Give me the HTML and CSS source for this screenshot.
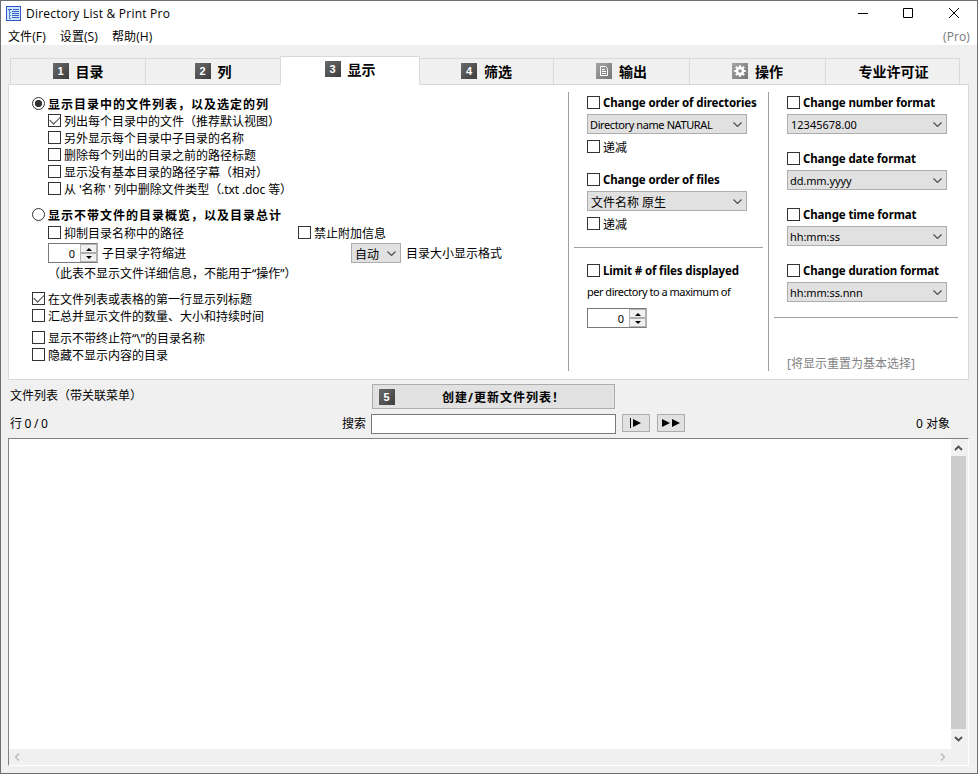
FILE: index.html
```html
<!DOCTYPE html>
<html lang="zh-CN">
<head>
  <meta charset="UTF-8" />
  <meta name="viewport" content="width=device-width, initial-scale=1.0"/>
  <title>Directory List &amp; Print Pro</title>
  <link rel="stylesheet" href="styles.css">
</head>
<body>
  <div class="window">
    <header class="titlebar">
      <svg class="app-icon" width="15" height="15" viewBox="0 0 15 15">
        <rect x="0.5" y="0.5" width="14" height="14" fill="#d3e5fb" stroke="#2d55c8"/>
        <path d="M2 3.5h4M7 3.5h6M6 5.5h7M6 7.5h7M6 9.5h7M6 11.5h7" stroke="#3560c9" fill="none"/>
        <path d="M3.5 4v8M3 6.5h2M3 9.5h2M3 12.5h2" stroke="#5a86dc" fill="none"/>
      </svg>
      <span class="app-name">Directory List &amp; Print Pro</span>
      <svg class="win-buttons" width="102" height="12" viewBox="0 0 102 12">
        <path d="M0 6.5h10M45.5 1.5h9v9h-9z" stroke="#000" fill="none"/>
        <path d="M91 1l10 10M101 1l-10 10" stroke="#000" fill="none"/>
      </svg>
    </header>
    <nav class="menubar">
      <span>文件(F)</span>
      <span>设置(S)</span>
      <span>帮助(H)</span>
      <span class="edition">(Pro)</span>
    </nav>

    <div class="tabs">
      <div class="tab w135"><i class="badge">1</i>目录</div>
      <div class="tab w135"><i class="badge">2</i>列</div>
      <div class="tab active"><i class="badge">3</i>显示</div>
      <div class="tab w133"><i class="badge">4</i>筛选</div>
      <div class="tab w136"><i class="badge light"><svg width="16" height="16" viewBox="0 0 16 16"><path d="M4.5 3.5h5l2 2v7h-7zM6 6.5h3M6 8.5h4M6 10.5h4" stroke="#fff" fill="none"/></svg></i>输出</div>
      <div class="tab w136"><i class="badge light"><svg width="16" height="16" viewBox="0 0 16 16"><circle cx="8" cy="8" r="3" stroke="#fff" stroke-width="2.4" fill="none"/><path d="M8 2.2v2M8 11.8v2M2.2 8h2M11.8 8h2M3.9 3.9l1.4 1.4M10.7 10.7l1.4 1.4M3.9 12.1l1.4-1.4M10.7 5.3l1.4-1.4" stroke="#fff" stroke-width="2.2"/></svg></i>操作</div>
      <div class="tab last">专业许可证</div>
    </div>

    <main class="panel">
      <section class="col-display">
        <div class="row head"><i class="radio on"></i>显示目录中的文件列表，以及选定的列</div>
        <div class="row sub"><i class="check on"></i>列出每个目录中的文件（推荐默认视图）</div>
        <div class="row sub"><i class="check"></i>另外显示每个目录中子目录的名称</div>
        <div class="row sub"><i class="check"></i>删除每个列出的目录之前的路径标题</div>
        <div class="row sub"><i class="check"></i>显示没有基本目录的路径字幕（相对）</div>
        <div class="row sub"><i class="check"></i><span class="types">从 '名称 ' 列中删除文件类型（.txt .doc 等）</span></div>

        <div class="row head second"><i class="radio"></i>显示不带文件的目录概览，以及目录总计</div>
        <div class="row sub pair">
          <span class="cell"><i class="check"></i>抑制目录名称中的路径</span>
          <span class="cell"><i class="check"></i>禁止附加信息</span>
        </div>
        <div class="row sub inputs">
          <div class="spin narrow"><b>0</b><i class="arrows"></i></div>
          <span class="indent-label">子目录字符缩进</span>
          <div class="select auto">自动<svg class="chev" width="9" height="5"><path d="M0.5 0.5l4 4 4-4"/></svg></div>
          <span>目录大小显示格式</span>
        </div>
        <div class="row sub note">（此表不显示文件详细信息，不能用于“操作”）</div>

        <div class="row gap9"><i class="check on"></i>在文件列表或表格的第一行显示列标题</div>
        <div class="row"><i class="check"></i>汇总并显示文件的数量、大小和持续时间</div>
        <div class="row gap5"><i class="check"></i><span>显示不带终止符“\”的目录名称</span></div>
        <div class="row"><i class="check"></i>隐藏不显示内容的目录</div>
      </section>

      <section class="col-order">
        <div class="row opt"><i class="check"></i>Change order of directories</div>
        <div class="select en dir">Directory name NATURAL<svg class="chev" width="9" height="5"><path d="M0.5 0.5l4 4 4-4"/></svg></div>
        <div class="row desc"><i class="check"></i>递减</div>
        <div class="row opt files"><i class="check"></i>Change order of files</div>
        <div class="select">文件名称 原生<svg class="chev" width="9" height="5"><path d="M0.5 0.5l4 4 4-4"/></svg></div>
        <div class="row desc"><i class="check"></i>递减</div>
        <hr>
        <div class="row opt limit"><i class="check"></i>Limit # of files displayed</div>
        <div class="row en per-dir">per directory to a maximum of</div>
        <div class="spin"><b>0</b><i class="arrows"></i></div>
      </section>

      <section class="col-format">
        <div class="row opt"><i class="check"></i>Change number format</div>
        <div class="select en">12345678.00<svg class="chev" width="9" height="5"><path d="M0.5 0.5l4 4 4-4"/></svg></div>
        <div class="row opt next"><i class="check"></i>Change date format</div>
        <div class="select en date">dd.mm.yyyy<svg class="chev" width="9" height="5"><path d="M0.5 0.5l4 4 4-4"/></svg></div>
        <div class="row opt next"><i class="check"></i>Change time format</div>
        <div class="select en date">hh:mm:ss<svg class="chev" width="9" height="5"><path d="M0.5 0.5l4 4 4-4"/></svg></div>
        <div class="row opt next"><i class="check"></i>Change duration format</div>
        <div class="select en date">hh:mm:ss.nnn<svg class="chev" width="9" height="5"><path d="M0.5 0.5l4 4 4-4"/></svg></div>
        <hr>
        <div class="row reset">[将显示重置为基本选择]</div>
      </section>
    </main>

    <div class="create-row">
      <span class="list-title">文件列表（带关联菜单）</span>
      <div class="create"><i class="badge">5</i><span>创建/更新文件列表！</span></div>
    </div>
    <div class="search-row">
      <span class="lines">行 0 / 0</span>
      <span class="search-label">搜索</span>
      <input class="search" type="text">
      <div class="btn"><svg width="26" height="16"><path d="M7.5 3v10" stroke="#000"/><path d="M10 4v8l8-4z"/></svg></div>
      <div class="btn"><svg width="26" height="16"><path d="M4 4v8l8-4zM14 4v8l8-4z"/></svg></div>
      <span class="objects">0 对象</span>
    </div>

    <div class="list">
      <div class="list-body"></div>
      <div class="vbar">
        <svg width="15" height="17"><path d="M4 11l3.5-3.5L11 11" stroke="#505050" stroke-width="1.8" fill="none"/></svg>
        <div class="thumb"></div>
        <svg width="15" height="20"><path d="M4 8l3.5 3.5L11 8" stroke="#505050" stroke-width="1.8" fill="none"/></svg>
      </div>
      <div class="hbar">
        <svg width="16" height="16"><path d="M10 4.5L6.5 8l3.5 3.5" stroke="#bfbfbf" stroke-width="1.6" fill="none"/></svg>
        <svg width="16" height="16"><path d="M6 4.5L9.5 8 6 11.5" stroke="#bfbfbf" stroke-width="1.6" fill="none"/></svg>
      </div>
    </div>
  </div>
</body>
</html>
```
FILE: styles.css
```css
* {
  box-sizing: border-box;
}

body {
  margin: 0;
  font-family: "Noto Sans", "Noto Sans CJK SC", sans-serif;
  font-size: 12px;
  color: #000;
  overflow: hidden;
}

i {
  font-style: normal;
}

.window {
  width: 978px;
  height: 774px;
  border: 1px solid #6e6e6e;
  background: #f0f0f0;
  display: flex;
  flex-direction: column;
  white-space: nowrap;
}

/* Title and menu */
.titlebar {
  height: 25px;
  background: #fff;
  display: flex;
  align-items: center;
  padding: 0 17px 1px 5px;
}

.app-name {
  margin-left: 5px;
  font-family: "Open Sans", sans-serif;
  letter-spacing: 0.23px;
}

.win-buttons {
  margin-left: auto;
}

.menubar {
  height: 19px;
  background: #fff;
  display: flex;
  align-items: center;
  gap: 14px;
  padding: 1px 7px 0;
  font-family: "Open Sans", "Noto Sans CJK SC", sans-serif;
  letter-spacing: 0.1px;
}

.edition {
  margin-left: auto;
  color: #777;
}

/* Tabs */
.tabs {
  display: flex;
  align-items: flex-end;
  height: 40px;
  padding-left: 9px;
  flex: none;
  position: relative;
  z-index: 1;
}

.tab {
  height: 27px;
  border: 1px solid #d9d9d9;
  border-right: none;
  display: flex;
  align-items: center;
  justify-content: center;
  gap: 7px;
  padding-bottom: 2px;
  font-size: 14px;
  font-weight: bold;
}

.w133 { width: 133px; }
.w135 { width: 135px; }
.w136 { width: 136px; }

.tab.active {
  width: 140px;
  height: 29px;
  background: #fff;
  border-right: 1px solid #d9d9d9;
  border-bottom-color: #fff;
  padding-bottom: 4px;
}

.tab.active + .tab {
  border-left: none;
}

.tab.last {
  width: 135px;
  border-right: 1px solid #d9d9d9;
  padding-left: 2px;
}

.badge {
  width: 16px;
  height: 16px;
  background: linear-gradient(135deg, #6b6b6b, #3c3c3c);
  color: #fff;
  font: bold 11px/16px "Liberation Sans", sans-serif;
  text-align: center;
}

.tab .badge {
  margin-top: 1px;
}

.badge.light {
  background: linear-gradient(135deg, #a5a5a5, #757575);
}

.badge svg {
  display: block;
}

/* Settings panel */
.panel {
  margin: -1px 0 0 7px;
  width: 961px;
  height: 296px;
  flex: none;
  background: #fff;
  border: 1px solid #d9d9d9;
  display: flex;
}

.row {
  height: 17px;
  display: flex;
  align-items: center;
}

.check,
.radio {
  width: 13px;
  height: 13px;
  border: 1px solid #333;
  background: #fff;
  margin-right: 3px;
  flex: none;
}

.radio {
  border-radius: 50%;
}

.radio.on {
  background: radial-gradient(circle, #333 3.3px, #fff 4px);
}

.check.on::after {
  content: "";
  display: block;
  width: 9px;
  height: 5px;
  margin: 1px 0 0 1px;
  border: solid #444;
  border-width: 0 0 1.5px 1.5px;
  transform: rotate(-45deg);
}

.col-display {
  width: 560px;
  padding: 10px 0 0 23px;
}

.head {
  font-weight: bold;
  letter-spacing: 1px;
}

.second { margin: 9px 0 1px; }
.sub { padding-left: 16px; }
.gap9 { margin-top: 9px; }
.gap5 { margin-top: 5px; }

.types {
  letter-spacing: -0.1px;
}

.cell {
  width: 250px;
  display: flex;
  align-items: center;
}

.inputs {
  height: 20px;
  margin: 2px 0 1px;
}

.indent-label {
  width: 249px;
  margin-left: 4px;
}

.select {
  width: 160px;
  height: 20px;
  border: 1px solid #adadad;
  background: #e1e1e1;
  display: flex;
  align-items: center;
  padding: 1px 4px 0 3px;
}

.select.auto {
  width: 50px;
  margin-right: 5px;
}

.chev {
  margin-left: auto;
  fill: none;
  stroke: #505050;
  stroke-width: 1.2;
}

.spin {
  width: 60px;
  height: 20px;
  border: 1px solid #7a7a7a;
  border-right-color: #adadad;
  background: #fff;
  display: flex;
  justify-content: flex-end;
  align-items: center;
}

.spin.narrow {
  width: 50px;
}

.spin b {
  font-weight: normal;
  font-size: 11px;
  margin-right: 5px;
}

.arrows {
  width: 17px;
  height: 18px;
  border: 1px solid #b5b5b5;
  display: grid;
  grid-template-rows: 1fr 1fr;
  background: linear-gradient(#f0f0f0 7px, #adadad 7px, #adadad 9px, #f0f0f0 9px);
  place-items: center;
}

.arrows::before,
.arrows::after {
  content: "";
  border: solid transparent;
  border-width: 0 3px 3px;
  border-bottom-color: #000;
}

.arrows::after {
  transform: rotate(180deg);
}

/* Ordering and format columns */
.col-order,
.col-format {
  border-left: 1px solid #a0a0a0;
  margin-top: 7px;
  height: 279px;
  padding: 2px 0 0 18px;
}

.col-order {
  width: 200px;
  margin-left: -1px;
}

.col-format {
  flex: 1;
}

.opt {
  font-weight: bold;
  font-size: 11.5px;
  letter-spacing: -0.13px;
  margin-bottom: 3px;
}

.en {
  font-size: 11px;
}

.dir { letter-spacing: -0.4px; padding-left: 2px; }
.date { letter-spacing: -0.1px; padding-left: 2px; }
.desc { margin-top: 4px; }
.files { margin-top: 16px; }
.next { margin-top: 16px; }

hr {
  border: none;
  height: 1px;
  background: #a0a0a0;
  margin: 15px 5px 0 -13px;
}

.limit {
  margin-top: 14px;
}

.per-dir {
  margin: 4px 0 8px;
  letter-spacing: -0.5px;
}

.col-format hr {
  margin: 15px 10px 0 -13px;
}

.reset {
  margin-top: 36px;
  color: #838383;
}

/* Create and search rows */
.create-row {
  display: flex;
  height: 31px;
  align-items: center;
  padding-left: 9px;
}

.list-title {
  width: 362px;
  padding-bottom: 2px;
}

.create {
  width: 243px;
  height: 25px;
  margin-top: 2px;
  border: 1px solid #adadad;
  background: #e1e1e1;
  display: flex;
  align-items: center;
  padding-left: 6px;
  font-weight: bold;
  letter-spacing: 1px;
}

.create span {
  margin-left: 47px;
}

.search-row {
  display: flex;
  height: 26px;
  align-items: center;
  padding: 0 27px 0 9px;
}

.lines {
  width: 332px;
  padding-bottom: 2px;
  letter-spacing: -0.3px;
}

.search-label {
  width: 29px;
  padding-bottom: 2px;
}

.search {
  width: 245px;
  height: 20px;
  margin-top: -1px;
  border: 1px solid #7a7a7a;
  padding: 0;
  background: #fff;
}

.btn {
  width: 28px;
  height: 18px;
  margin: -2px 0 0 6px;
  border: 1px solid #adadad;
  background: #e1e1e1;
}

.btn + .btn {
  margin-left: 7px;
}

.btn svg {
  display: block;
}

.objects {
  margin-left: auto;
  padding-bottom: 2px;
}

/* File list */
.list {
  width: 961px;
  height: 328px;
  margin: 1px 0 0 7px;
  flex: none;
  border: 1px solid #828282;
  border-right-color: #fff;
  border-bottom-color: #fff;
  display: grid;
  grid-template: 310px 16px / 942px 15px;
}

.list-body {
  background: #fff;
}

.vbar {
  display: flex;
  flex-direction: column;
}

.thumb {
  flex: 1;
  background: #cdcdcd;
}

.hbar {
  display: flex;
  justify-content: space-between;
}
```
